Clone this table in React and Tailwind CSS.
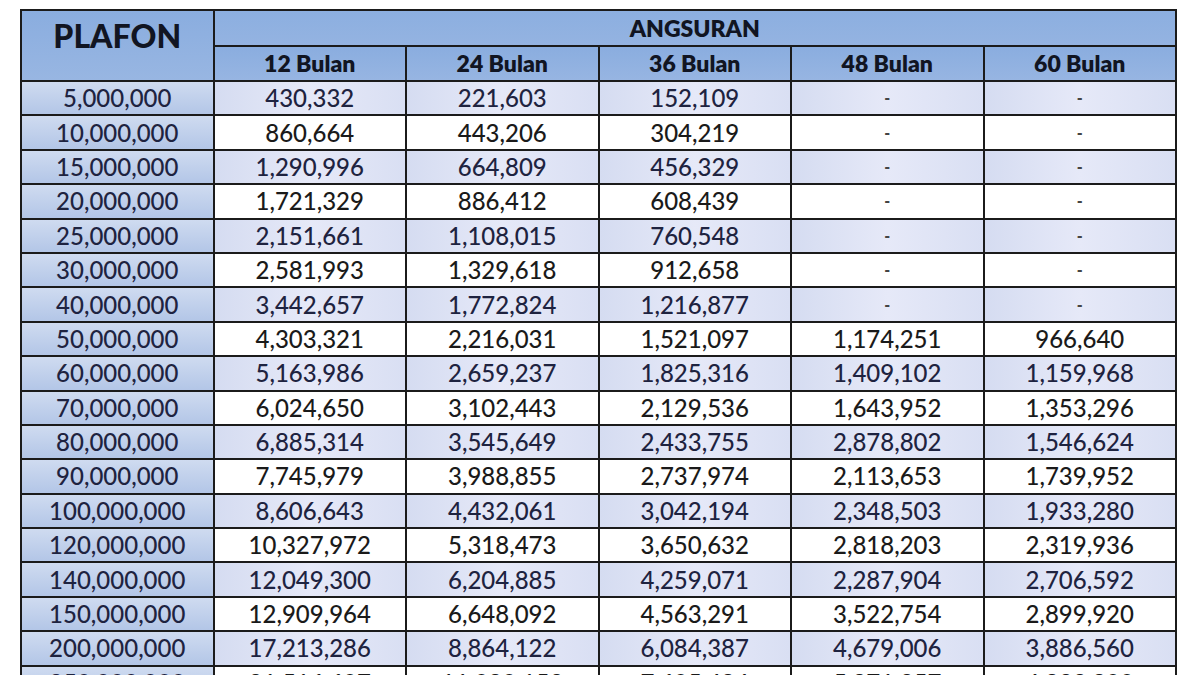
const rows = [
  ["5,000,000", "430,332", "221,603", "152,109", "-", "-"],
  ["10,000,000", "860,664", "443,206", "304,219", "-", "-"],
  ["15,000,000", "1,290,996", "664,809", "456,329", "-", "-"],
  ["20,000,000", "1,721,329", "886,412", "608,439", "-", "-"],
  ["25,000,000", "2,151,661", "1,108,015", "760,548", "-", "-"],
  ["30,000,000", "2,581,993", "1,329,618", "912,658", "-", "-"],
  ["40,000,000", "3,442,657", "1,772,824", "1,216,877", "-", "-"],
  ["50,000,000", "4,303,321", "2,216,031", "1,521,097", "1,174,251", "966,640"],
  ["60,000,000", "5,163,986", "2,659,237", "1,825,316", "1,409,102", "1,159,968"],
  ["70,000,000", "6,024,650", "3,102,443", "2,129,536", "1,643,952", "1,353,296"],
  ["80,000,000", "6,885,314", "3,545,649", "2,433,755", "2,878,802", "1,546,624"],
  ["90,000,000", "7,745,979", "3,988,855", "2,737,974", "2,113,653", "1,739,952"],
  ["100,000,000", "8,606,643", "4,432,061", "3,042,194", "2,348,503", "1,933,280"],
  ["120,000,000", "10,327,972", "5,318,473", "3,650,632", "2,818,203", "2,319,936"],
  ["140,000,000", "12,049,300", "6,204,885", "4,259,071", "2,287,904", "2,706,592"],
  ["150,000,000", "12,909,964", "6,648,092", "4,563,291", "3,522,754", "2,899,920"],
  ["200,000,000", "17,213,286", "8,864,122", "6,084,387", "4,679,006", "3,886,560"],
  ["250,000,000", "21,516,607", "11,080,153", "7,605,484", "5,871,257", "4,832,800"],
];

const months = ["12 Bulan", "24 Bulan", "36 Bulan", "48 Bulan", "60 Bulan"];

const Cell = ({ value, shaded }) => (
  <div
    className={
      shaded
        ? "flex items-center justify-center bg-gradient-to-r from-[#d5dcf1] via-[#e6e9f8] to-[#d9dff3] text-[#1e2340]"
        : "flex items-center justify-center bg-white text-[#1a1a1a]"
    }
  >
    {value === "-" ? (
      <span className="text-[16px] font-black text-[#444]">-</span>
    ) : (
      value
    )}
  </div>
);

const App = () => {
  return (
    <div className="h-[675px] overflow-hidden bg-white font-['Lato',_'Liberation_Sans',_sans-serif]">
      <div className="ml-[20px] mt-[9px] w-[1157px] bg-[#1b1b1b] p-[2px]">
        <div className="grid grid-cols-6 grid-rows-[34px_33px_repeat(18,32.4px)] gap-[2px] text-[24px] font-medium leading-none">
          <div className="row-span-2 flex items-start justify-center bg-gradient-to-b from-[#8aaddf] to-[#98b6e2] pt-[9px] text-[32px] font-black text-[#111522]">
            PLAFON
          </div>
          <div className="col-span-5 flex items-center justify-center bg-gradient-to-b from-[#8cafe0] to-[#94b3e1] text-[23px] font-extrabold text-[#111522]">
            ANGSURAN
          </div>
          {months.map((m) => (
            <div
              key={m}
              className="flex items-center justify-center bg-gradient-to-b from-[#8aaddf] to-[#97b5e2] text-[23px] font-extrabold text-[#111522]"
            >
              {m}
            </div>
          ))}
          {rows.map((row, i) => (
            <div key={row[0]} className="contents">
              <div className="flex items-center justify-center bg-gradient-to-b from-[#cfdbf0] to-[#b3c6e7] text-[#1e2340]">
                {row[0]}
              </div>
              {row.slice(1).map((v, j) => (
                <Cell key={j} value={v} shaded={i % 2 === 0} />
              ))}
            </div>
          ))}
        </div>
      </div>
    </div>
  );
};

export default App;
